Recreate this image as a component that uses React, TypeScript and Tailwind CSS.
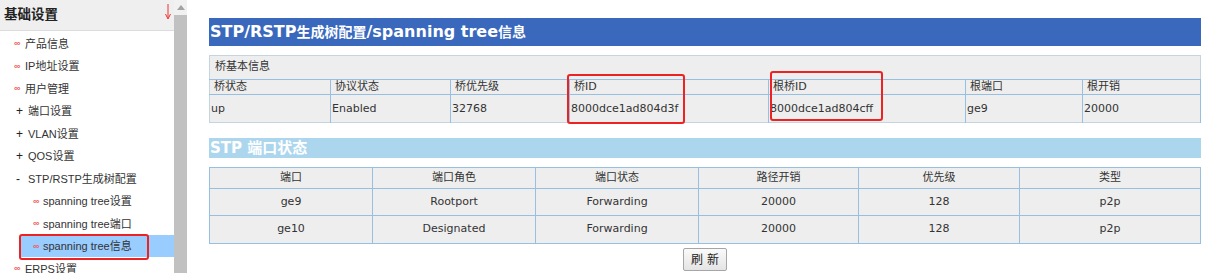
import React from "react";

const sideFont = { fontFamily: '"Liberation Sans", "Noto Sans CJK SC", sans-serif' };
const mainFont = { fontFamily: '"DejaVu Sans", "Noto Sans CJK SC", sans-serif' };

function Inf({ className = "" }: { className?: string }) {
  return (
    <span className={"inline-block text-[9px] font-bold leading-none text-[#f25a5a] " + className}>∞</span>
  );
}

type Item = { kind: "inf" | "plus" | "minus" | "sub"; label: string; active?: boolean };

const items: Item[] = [
  { kind: "inf", label: "产品信息" },
  { kind: "inf", label: "IP地址设置" },
  { kind: "inf", label: "用户管理" },
  { kind: "plus", label: "端口设置" },
  { kind: "plus", label: "VLAN设置" },
  { kind: "plus", label: "QOS设置" },
  { kind: "minus", label: "STP/RSTP生成树配置" },
  { kind: "sub", label: "spanning tree设置" },
  { kind: "sub", label: "spanning tree端口" },
  { kind: "sub", label: "spanning tree信息", active: true },
  { kind: "inf", label: "ERPS设置" },
];

function SideItem({ it }: { it: Item }) {
  if (it.kind === "inf") {
    return (
      <div className="flex h-[22.5px] items-center pl-[14px]">
        <Inf className="w-[11px]" />
        <span>{it.label}</span>
      </div>
    );
  }
  if (it.kind === "plus" || it.kind === "minus") {
    return (
      <div className="flex h-[22.5px] items-center pl-[16px]">
        <span className="w-[12px] text-[12px] leading-none text-[#222]">{it.kind === "plus" ? "+" : "-"}</span>
        <span>{it.label}</span>
      </div>
    );
  }
  if (it.active) {
    return (
      <div className="relative flex h-[22.5px] items-center">
        <div className="ml-[21px] flex h-[22px] flex-1 items-center bg-[#99ccff] pl-[12px]">
          <Inf className="w-[10px]" />
          <span>{it.label}</span>
        </div>
        <div className="absolute left-[19px] top-[-1px] h-[26px] w-[130px] rounded-[3px] border-2 border-[#ee2222]" />
      </div>
    );
  }
  return (
    <div className="flex h-[22.5px] items-center pl-[33px]">
      <Inf className="w-[10px]" />
      <span>{it.label}</span>
    </div>
  );
}

const t1Cols = [121, 120, 119, 199, 197, 117, 118];
const t1Head = ["桥状态", "协议状态", "桥优先级", "桥ID", "根桥ID", "根端口", "根开销"];
const t1Data = ["up", "Enabled", "32768", "8000dce1ad804d3f", "8000dce1ad804cff", "ge9", "20000"];

const t2Cols = [163, 163, 163, 160, 161, 181];
const t2Head = ["端口", "端口角色", "端口状态", "路径开销", "优先级", "类型"];
const t2Rows = [
  ["ge9", "Rootport", "Forwarding", "20000", "128", "p2p"],
  ["ge10", "Designated", "Forwarding", "20000", "128", "p2p"],
];

export default function App() {
  return (
    <div className="flex h-[273px] w-[1213px] overflow-hidden bg-white">
      {/* Sidebar */}
      <div className="w-[174px] shrink-0 bg-white text-[11px] text-[#333]" style={sideFont}>
        <div className="flex h-[31px] items-center justify-between border-b border-[#dcdcdc] bg-[#efefef] pl-[4px] pr-[2px]">
          <span className="text-[13.5px] font-bold text-[#222]">基础设置</span>
          <svg width="8" height="18" viewBox="0 0 8 18" className="mb-[6px]">
            <line x1="4" y1="1" x2="4" y2="15" stroke="#ee3333" strokeWidth="1" />
            <polyline points="1.5,11 4,16 6.5,11" fill="none" stroke="#ee3333" strokeWidth="1" />
          </svg>
        </div>
        <div className="pt-[1.5px]">
          {items.map((it, i) => (
            <SideItem key={i} it={it} />
          ))}
        </div>
      </div>
      {/* Scrollbar */}
      <div className="flex w-[16px] shrink-0 flex-col bg-white">
        <div className="flex h-[15px] w-[13px] items-center justify-center bg-[#f1f1f1]">
          <svg width="8" height="5" viewBox="0 0 8 5">
            <polygon points="0,5 4,0 8,5" fill="#a3a3a3" />
          </svg>
        </div>
        <div className="w-[13px] flex-1 bg-[#c1c1c1]" />
      </div>
      {/* Main */}
      <div className="flex-1 pl-[19px] pr-[13px] pt-[18px] text-[11px] text-[#333]" style={mainFont}>
        <div className="flex h-[28px] items-center bg-[#3968bd] pl-[1px] text-[16px] font-bold text-white">
          <span>STP/RSTP</span>
          <span className="text-[14px]">生成树配置</span>
          <span>/spanning tree</span>
          <span className="text-[14px]">信息</span>
        </div>

        <table className="mt-[9px] w-full table-fixed border-collapse border border-[#c4d4e0] bg-[#eeeeee]">
          <colgroup>
            {t1Cols.map((w, i) => (
              <col key={i} style={{ width: w }} />
            ))}
          </colgroup>
          <tbody>
            <tr className="h-[24px]">
              <td colSpan={7} className="border-b border-[#96bfe2] pl-[5px] align-middle">
                桥基本信息
              </td>
            </tr>
            <tr className="h-[15px]">
              {t1Head.map((h, i) => (
                <td
                  key={i}
                  className="relative border-b border-r border-[#96bfe2] py-0 pl-[4px] align-middle leading-[14px]"
                >
                  {h}
                  {i === 3 && (
                    <div className="absolute left-[-3px] top-[-6px] h-[50px] w-[118px] rounded-[3px] border-2 border-[#ee2222]" />
                  )}
                  {i === 4 && (
                    <div className="absolute left-[1px] top-[-9px] h-[50px] w-[113px] rounded-[3px] border-2 border-[#ee2222]" />
                  )}
                </td>
              ))}
            </tr>
            <tr className="h-[28px]">
              {t1Data.map((d, i) => (
                <td key={i} className="border-r border-[#96bfe2] pl-[1px] pt-[2px] align-middle">
                  {d}
                </td>
              ))}
            </tr>
          </tbody>
        </table>

        <div className="mt-[15px] flex h-[20px] items-center bg-[#acd6ee] pl-[1px] text-[15px] font-bold text-white">
          STP 端口状态
        </div>

        <table className="mt-[9px] w-full table-fixed border-collapse border border-[#a9cbe6] bg-[#eeeeee] text-center">
          <colgroup>
            {t2Cols.map((w, i) => (
              <col key={i} style={{ width: w }} />
            ))}
          </colgroup>
          <tbody>
            <tr className="h-[21px]">
              {t2Head.map((h, i) => (
                <td key={i} className="border border-[#96bfe2] align-middle">
                  {h}
                </td>
              ))}
            </tr>
            {t2Rows.map((r, ri) => (
              <tr key={ri} className={ri === 0 ? "h-[27px]" : "h-[28px]"}>
                {r.map((c, ci) => (
                  <td key={ci} className="border border-[#96bfe2] align-middle">
                    {c}
                  </td>
                ))}
              </tr>
            ))}
          </tbody>
        </table>

        <div className="mt-[4px] flex justify-center">
          <button className="h-[23px] w-[44px] rounded-[2px] border border-[#a6a6a6] bg-gradient-to-b from-[#fafafa] to-[#e4e4e4] text-[12px] text-[#222]">
            刷 新
          </button>
        </div>
      </div>
    </div>
  );
}
